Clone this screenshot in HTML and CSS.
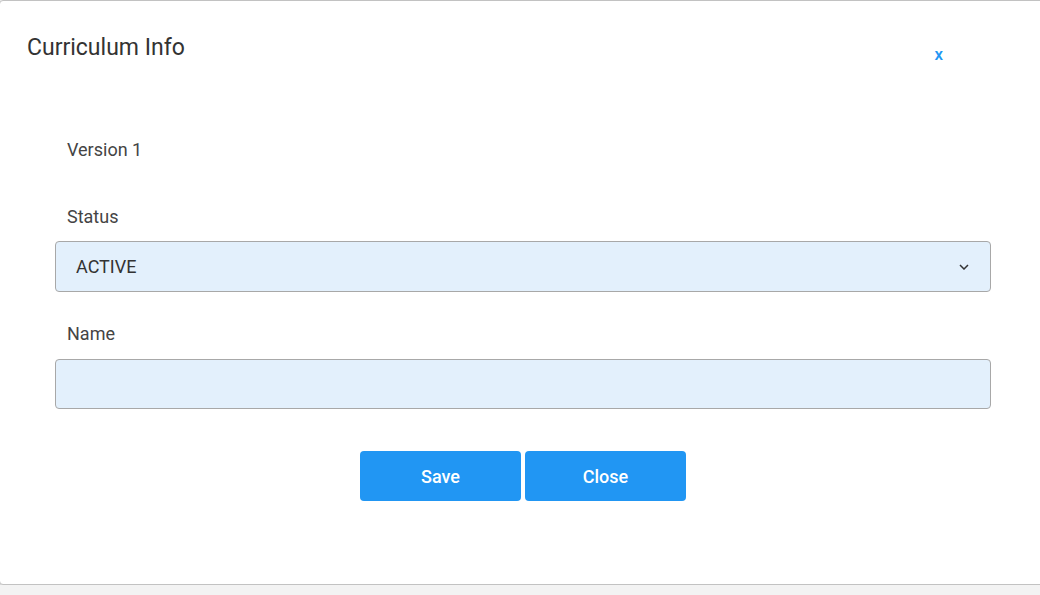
FILE: index.html
```html
<!DOCTYPE html>
<html lang="en">
<head>
  <meta charset="UTF-8" />
  <meta name="viewport" content="width=device-width, initial-scale=1.0"/>
  <title>Curriculum Info</title>
  <link rel="stylesheet" href="styles.css">
</head>
<body>

  <div class="dialog">
    <div class="dialog-header">
      <h2 class="dialog-title">Curriculum Info</h2>
      <a class="dialog-close" href="#">x</a>
    </div>

    <form class="dialog-form">
      <div class="version">Version 1</div>

      <label class="field-label" for="status">Status</label>
      <div class="select-wrap">
        <select id="status" class="field-box">
          <option>ACTIVE</option>
          <option>INACTIVE</option>
        </select>
        <svg class="chevron" width="10" height="6" viewBox="0 0 10 6">
          <path d="M1 1 L5 5 L9 1" fill="none" stroke="#333" stroke-width="1.5"/>
        </svg>
      </div>

      <label class="field-label name-label" for="name">Name</label>
      <input type="text" id="name" class="field-box" />

      <div class="actions">
        <button type="button" class="btn">Save</button>
        <button type="button" class="btn">Close</button>
      </div>
    </form>
  </div>

</body>
</html>
```

FILE: styles.css
```css
body { margin: 0; background: #f3f3f3; font-family: Roboto, "Liberation Sans", Arial, sans-serif; }

.dialog { margin-left: -1px; width: 1048px; height: 585px; box-sizing: border-box; background: #fff; border: 1px solid #c2c2c2; border-radius: 4px; box-shadow: 0 4px 10px rgba(0,0,0,.2); }

.dialog-header { display: flex; justify-content: space-between; align-items: flex-start; padding: 33px 103px 0 27px; }
.dialog-title { margin: 0; font-size: 23px; line-height: 27px; font-weight: 400; color: #333; }
.dialog-close { margin-top: 10px; font-size: 17px; line-height: 20px; font-weight: 500; color: #2196f3; text-decoration: none; }

.dialog-form { display: flex; flex-direction: column; padding: 75px 55px 0 55px; }
.version, .field-label { font-size: 18px; line-height: 21px; color: #444; padding-left: 12px; }
.version { margin-bottom: 46px; }
.field-label { margin-bottom: 14px; }
.name-label { margin-top: 31px; margin-bottom: 15px; }

.select-wrap { position: relative; }
.field-box { display: block; width: 100%; box-sizing: border-box; height: 51px; padding: 0 20px; background: #e3f0fc; border: 1px solid #a8a8a8; border-radius: 4px; font-family: inherit; font-size: 18px; color: #333; outline: none; }
select.field-box { appearance: none; -webkit-appearance: none; }
input.field-box { height: 50px; }
.chevron { position: absolute; right: 22px; top: 23px; }

.actions { display: flex; justify-content: center; gap: 4px; margin-top: 42px; }
.btn { width: 161px; height: 50px; background: #2196f3; color: #fff; border: none; border-radius: 4px; font-family: inherit; font-size: 18px; font-weight: 500; cursor: pointer; }
```
